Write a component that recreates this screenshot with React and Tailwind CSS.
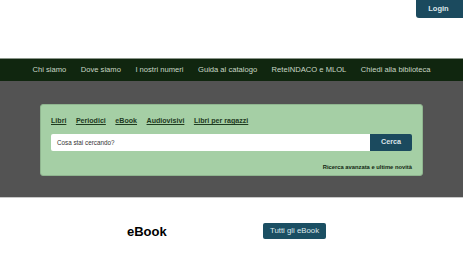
import React from 'react';

const navItems = ['Chi siamo', 'Dove siamo', 'I nostri numeri', 'Guida al catalogo', 'ReteINDACO e MLOL', 'Chiedi alla biblioteca'];
const tabs = ['Libri', 'Periodici', 'eBook', 'Audiovisivi', 'Libri per ragazzi'];

const App = () => {
  return (
    <div className="w-[463px] h-[256px] bg-white overflow-hidden" style={{ fontFamily: '"Liberation Sans", Arial, sans-serif' }}>
      <div className="h-[58px] flex justify-end items-start">
        <button className="w-[47px] h-[18px] bg-[#1b4a5e] text-[#dfe8ec] text-[7.5px] font-bold rounded-bl-[3px] pr-[2px]">
          Login
        </button>
      </div>

      <nav className="h-[23px] bg-[#10260f] border-t border-[#8a968a] flex items-center justify-center gap-[14.5px]">
        {navItems.map((item) => (
          <a key={item} className="text-[7.6px] text-[#c9d8c6] leading-none">
            {item}
          </a>
        ))}
      </nav>

      <div className="h-[117px] bg-[#535353] border-b border-[#c8c8c8] pt-[23px] px-[40px]">
        <div className="h-[72px] bg-[#a5cfa5] border border-[#8fb58f] rounded-[3px] pt-[10px] px-[10px]">
          <div className="flex gap-[9.5px] h-[14px] items-center">
            {tabs.map((tab) => (
              <a key={tab} className="text-[7.1px] font-bold text-[#1e3a1e] underline leading-none">
                {tab}
              </a>
            ))}
          </div>
          <div className="flex mt-[5px] h-[17px]">
            <div className="flex-1 bg-white rounded-l-[2px] flex items-center pl-[6px] text-[6.3px] text-[#333]">
              Cosa stai cercando?
            </div>
            <button className="w-[42px] bg-[#1b4a5e] text-[#dbe5ea] text-[7.2px] font-bold rounded-r-[2px]">
              Cerca
            </button>
          </div>
          <div className="flex justify-end mt-[12px] text-[5.8px] font-bold text-[#142814]">
            Ricerca avanzata e ultime novità
          </div>
        </div>
      </div>

      <div className="flex items-center pl-[127px] pt-[25px]">
        <h2 className="text-[13px] font-bold text-black w-[136px] leading-none">eBook</h2>
        <button className="w-[63px] h-[16px] bg-[#1b4f63] text-[#dde8ec] text-[7.8px] rounded-[2px]">
          Tutti gli eBook
        </button>
      </div>
    </div>
  );
};

export default App;
